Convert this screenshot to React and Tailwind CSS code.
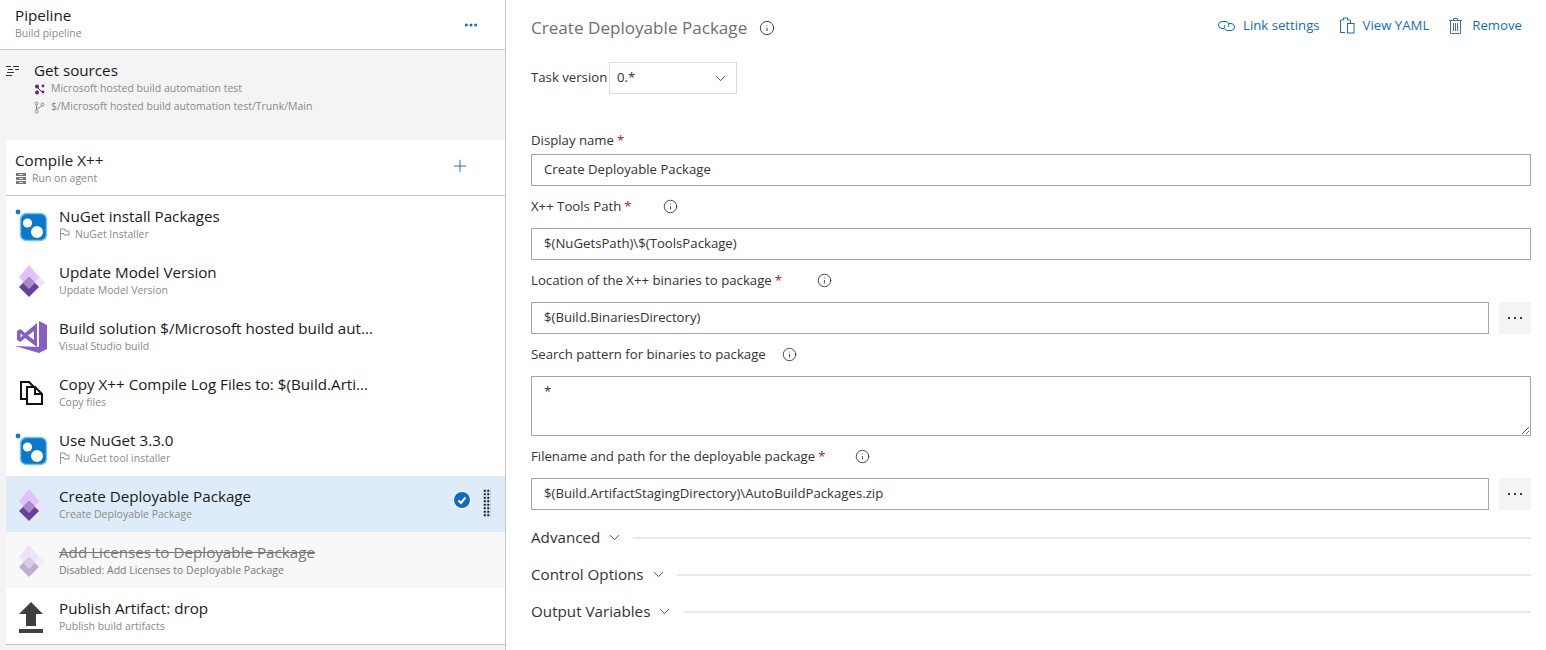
import React from "react";
import { Plus, ChevronDown, Info, Ellipsis } from "lucide-react";

const font = "font-['Open_Sans','Noto_Sans',sans-serif]";

function NuGetIcon() {
  return (
    <svg width="40" height="40" viewBox="0 0 40 40">
      <circle cx="4" cy="8" r="2.4" fill="#0f78c8" />
      <rect x="6.5" y="9.5" width="26" height="27" rx="6" fill="#0b78cc" stroke="#6cc6f2" strokeWidth="1.4" />
      <circle cx="13.5" cy="19" r="4.6" fill="#fff" />
      <circle cx="23" cy="28" r="6" fill="#fff" />
    </svg>
  );
}

function DiamondIcon({ faded }) {
  return (
    <svg width="40" height="40" viewBox="0 0 40 40" className={faded ? "opacity-40" : ""}>
      <path d="M24 15 L31 22 L24 29 L17 22 Z" fill="#efe0fb" />
      <path d="M15 5 L25 17 L15 29 L5 17 Z" fill="#e2c2fa" />
      <path d="M15 17 L25 27 L15 37 L5 27 Z" fill="#674298" />
      <path d="M15 17 L21 23 L15 29 L9 23 Z" fill="#a98bcb" />
    </svg>
  );
}

function VsIcon() {
  return (
    <svg width="40" height="40" viewBox="0 0 40 40">
      <path d="M25 5 L33 9 V33 L25 37 L1 30 L25 31 Z" fill="#865fc5" />
      <path d="M3 15 L6.5 13 L11 17 L23 7 V31 L11 22 L6.5 26 L3 24 Z M6.5 17.5 V21.5 L9 19.5 Z M14 19.5 L20 24 V15 Z" fill="#865fc5" fillRule="evenodd" />
    </svg>
  );
}

function CopyIcon() {
  return (
    <svg width="40" height="40" viewBox="0 0 40 40" fill="none" stroke="#111" strokeWidth="2">
      <path d="M13 27 H7 V10 H15 L20 15" />
      <path d="M13 15 H21 L28 22 V32 H13 Z" fill="#fff" />
      <path d="M21 15 V22 H28" />
    </svg>
  );
}

function PublishIcon() {
  return (
    <svg width="40" height="40" viewBox="0 0 40 40" fill="#404040">
      <path d="M17 6 L29 18 H22 V30 H12 V18 H5 Z" />
      <rect x="5" y="33" width="24" height="4" />
    </svg>
  );
}

function SourcesIcon() {
  return (
    <svg width="15" height="13" viewBox="0 0 15 13" stroke="#333" strokeWidth="1">
      <path d="M1 2.5 H6 M8 2.5 H14 M3 5.5 H8 M10 5.5 H14 M2 8.5 H9 M1 11.5 H7" />
    </svg>
  );
}

function RepoIcon() {
  return (
    <svg width="11" height="11" viewBox="0 0 11 11" fill="#68217a">
      <circle cx="3" cy="2.5" r="2" />
      <circle cx="3" cy="8.5" r="2" />
      <circle cx="9" cy="2" r="1.4" />
      <circle cx="9" cy="8" r="1.4" />
      <path d="M3 3 L8 8" stroke="#68217a" />
    </svg>
  );
}

function BranchIcon() {
  return (
    <svg width="11" height="13" viewBox="0 0 11 13" fill="none" stroke="#888" strokeWidth="1">
      <circle cx="2.5" cy="2.5" r="1.5" />
      <circle cx="2.5" cy="10.5" r="1.5" />
      <circle cx="8.5" cy="3.5" r="1.5" />
      <path d="M2.5 4 V9 M8 5 L3 8" />
    </svg>
  );
}

function AgentIcon() {
  return (
    <svg width="10" height="11" viewBox="0 0 10 11" fill="#777" className="ml-[1px]">
      <path d="M0 0 H10 V3 H0 Z M0 4 H10 V7 H0 Z M0 8 H10 V11 H0 Z" />
      <path d="M3 1.5 H7 M3 5.5 H7 M3 9.5 H7" stroke="#ddd" />
    </svg>
  );
}

function FlagIcon() {
  return (
    <svg width="11" height="12" viewBox="0 0 11 12" fill="none" stroke="#8a94a0" strokeWidth="1">
      <path d="M1.5 12 V1 H6 V3 H10 V7 H5 V5.5 H1.5" />
    </svg>
  );
}

function LinkIcon() {
  return (
    <svg width="17" height="12" viewBox="0 0 17 12" fill="none" stroke="#106ebe" strokeWidth="1">
      <path d="M6 8.5 H4 A3.5 3.5 0 0 1 4 1.5 H8 A3.5 3.5 0 0 1 10 7" />
      <path d="M11 3.5 H13 A3.5 3.5 0 0 1 13 10.5 H9 A3.5 3.5 0 0 1 7 5" />
    </svg>
  );
}

function ClipboardIcon() {
  return (
    <svg width="15" height="17" viewBox="0 0 15 17" fill="none" stroke="#106ebe" strokeWidth="1">
      <path d="M5 15.5 H0.5 V3 H3.5 V1 H7.5 V3 H10.5 V6" />
      <rect x="7.5" y="6.5" width="6.5" height="9.5" fill="#fff" />
    </svg>
  );
}

function TrashIcon() {
  return (
    <svg width="13" height="16" viewBox="0 0 13 16" fill="none" stroke="#3f6fc0" strokeWidth="1">
      <path d="M0 2.5 H13 M4.5 2.5 V0.5 H8.5 V2.5 M1.5 2.5 V15.5 H11.5 V2.5 M4.5 5 V13 M6.5 5 V13 M8.5 5 V13" />
    </svg>
  );
}

function BrowseDots() {
  return (
    <svg width="16" height="4" viewBox="0 0 16 4" fill="#333">
      <rect x="1" y="1" width="2" height="2" />
      <rect x="7" y="1" width="2" height="2" />
      <rect x="13" y="1" width="2" height="2" />
    </svg>
  );
}

function TaskRow({ icon, title, sub, flag, selected, disabled }) {
  return (
    <div className={`flex items-center h-14 relative ${selected ? "bg-[#deecf9]" : disabled ? "bg-[#f8f8f8]" : "bg-white"}`}>
      <div className="w-[53px] pl-[8px] shrink-0">{icon}</div>
      <div className="min-w-0 pt-[1px]">
        <div className={`text-[15.2px] leading-[18px] mb-[1px] whitespace-nowrap ${disabled ? "text-[#777] line-through" : "text-[#1a1a1a]"}`}>{title}</div>
        <div className="flex items-center gap-[5px] text-[10.5px] leading-[16px] text-[#8a8a8a]">
          {flag && <FlagIcon />}
          <span className={disabled ? "text-[#777]" : ""}>{sub}</span>
        </div>
      </div>
      {selected && (
        <div className="absolute right-[14px] top-[13px] flex items-start gap-[12px]">
          <svg width="18" height="18" viewBox="0 0 18 18" className="mt-[2px]">
            <circle cx="9" cy="9" r="9" fill="#fff" />
            <circle cx="9" cy="9" r="8" fill="#0f6cbd" />
            <path d="M5.5 9.5 L8 12 L12.5 6.5" fill="none" stroke="#fff" strokeWidth="2" />
          </svg>
          <div className="w-[8px] h-[28px] bg-[radial-gradient(#111_1.3px,transparent_1.4px)] bg-[length:3.5px_3.5px]" />
        </div>
      )}
    </div>
  );
}

function Label({ text, required, info, infoGap = "ml-4", compact }) {
  return (
    <div className={`${compact ? "h-[24px]" : "h-[40px]"} mb-[2px] flex items-center text-[13.2px] text-[#333]`}>
      <span className="pt-[2px]">{text}</span>
      {required && <span className="text-[#a4262c] ml-[3px] pt-[2px]">*</span>}
      {info && <Info size={15} strokeWidth={1.4} className={`${infoGap} text-[#333]`} />}
    </div>
  );
}

function TextInput({ value, browse }) {
  return (
    <div className="flex gap-[10px]">
      <div className="flex-1 h-8 border border-[#a6a6a6] px-3 flex items-center text-[13.2px] text-[#333]">{value}</div>
      {browse && (
        <div className="w-8 h-8 bg-[#f4f4f4] flex items-center justify-center">
          <BrowseDots />
        </div>
      )}
    </div>
  );
}

function Section({ title }) {
  return (
    <div className="h-[37px] flex items-center text-[15.2px] text-[#333]">
      <span>{title}</span>
      <ChevronDown size={17} strokeWidth={1.2} className="ml-[6px] mr-[10px]" />
      <div className="flex-1 h-[2px] bg-[#eaeaea]" />
    </div>
  );
}

export default function App() {
  return (
    <div className={`flex h-[650px] w-[1546px] overflow-hidden bg-white ${font}`}>
      <div className="w-[506px] shrink-0 border-r border-[#c8c8c8] bg-[#f4f4f4] flex flex-col">
        <div className="h-[50px] bg-white border-b border-[#c8c8c8] flex items-center justify-between pl-[15px] pr-[26px]">
          <div className="pb-[4px]">
            <div className="text-[15.2px] leading-[20px] text-[#1a1a1a]">Pipeline</div>
            <div className="text-[10.5px] leading-[16px] text-[#8a8a8a]">Build pipeline</div>
          </div>
          <Ellipsis size={16} strokeWidth={2.6} className="text-[#106ebe]" />
        </div>

        <div className="h-[90px] flex pt-[11px]">
          <div className="w-[34px] pl-[5px] pt-[3px] shrink-0"><SourcesIcon /></div>
          <div>
            <div className="text-[15.2px] leading-[19px] text-[#1a1a1a]">Get sources</div>
            <div className="flex items-center gap-[6px] h-[18px] text-[10.5px] text-[#8a8a8a]"><RepoIcon />Microsoft hosted build automation test</div>
            <div className="flex items-center gap-[6px] h-[18px] text-[10.5px] text-[#8a8a8a]"><BranchIcon />$/Microsoft hosted build automation test/Trunk/Main</div>
          </div>
        </div>

        <div className="ml-[6px]">
          <div className="h-14 bg-white border-b border-[#c8c8c8] flex justify-between pl-[9px] pr-[35px]">
            <div className="pt-[11px]">
              <div className="text-[15.2px] leading-[19px] text-[#1a1a1a]">Compile X++</div>
              <div className="flex items-center gap-[6px] text-[10.5px] leading-[16px] text-[#8a8a8a]"><AgentIcon />Run on agent</div>
            </div>
            <Plus size={20} strokeWidth={1.1} className="text-[#2b5fae] mt-[16px]" />
          </div>
          <TaskRow icon={<NuGetIcon />} title="NuGet install Packages" sub="NuGet Installer" flag />
          <TaskRow icon={<DiamondIcon />} title="Update Model Version" sub="Update Model Version" />
          <TaskRow icon={<VsIcon />} title="Build solution $/Microsoft hosted build aut..." sub="Visual Studio build" />
          <TaskRow icon={<CopyIcon />} title="Copy X++ Compile Log Files to: $(Build.Arti..." sub="Copy files" />
          <TaskRow icon={<NuGetIcon />} title="Use NuGet 3.3.0" sub="NuGet tool installer" flag />
          <TaskRow icon={<DiamondIcon />} title="Create Deployable Package" sub="Create Deployable Package" selected />
          <TaskRow icon={<DiamondIcon faded />} title="Add Licenses to Deployable Package" sub="Disabled: Add Licenses to Deployable Package" disabled />
          <TaskRow icon={<PublishIcon />} title="Publish Artifact: drop" sub="Publish build artifacts" />
          <div className="h-px bg-[#c8c8c8]" />
        </div>
      </div>

      <div className="flex-1 pl-[25px] pr-[15px]">
        <div className="h-[56px] flex items-center justify-between">
          <div className="flex items-center text-[17.1px] text-[#6f6f6f]">
            Create Deployable Package
            <Info size={16} strokeWidth={1.4} className="ml-3 text-[#333]" />
          </div>
          <div className="flex items-center text-[13.2px] text-[#106ebe] mr-[9px] -mt-[4px]">
            <LinkIcon /><span className="ml-2">Link settings</span>
            <span className="ml-[20px]"><ClipboardIcon /></span><span className="ml-2">View YAML</span>
            <span className="ml-[20px]"><TrashIcon /></span><span className="ml-[10px]">Remove</span>
          </div>
        </div>

        <div className="flex items-center h-8 mt-[6px] mb-[34px] text-[13.2px] text-[#333]">
          <span className="w-[78px]">Task version</span>
          <div className="w-[128px] h-8 border border-[#dcdcdc] pl-[7px] pr-[7px] flex items-center justify-between">
            <span>0.*</span>
            <ChevronDown size={17} strokeWidth={1.2} />
          </div>
        </div>

        <Label text="Display name" required compact />
        <TextInput value="Create Deployable Package" />
        <Label text="X++ Tools Path" required info infoGap="ml-[31px]" />
        <TextInput value="$(NuGetsPath)\$(ToolsPackage)" />
        <Label text="Location of the X++ binaries to package" required info infoGap="ml-[35px]" />
        <TextInput value="$(Build.BinariesDirectory)" browse />
        <Label text="Search pattern for binaries to package" info />
        <textarea readOnly value="*" className="w-full block h-[60px] border border-[#a6a6a6] px-3 py-[5px] text-[13.2px] text-[#333] outline-none" />
        <Label text="Filename and path for the deployable package" required info infoGap="ml-[30px]" />
        <TextInput value="$(Build.ArtifactStagingDirectory)\AutoBuildPackages.zip" browse />
        <div className="mt-[9px]">
          <Section title="Advanced" />
          <Section title="Control Options" />
          <Section title="Output Variables" />
        </div>
      </div>
    </div>
  );
}
